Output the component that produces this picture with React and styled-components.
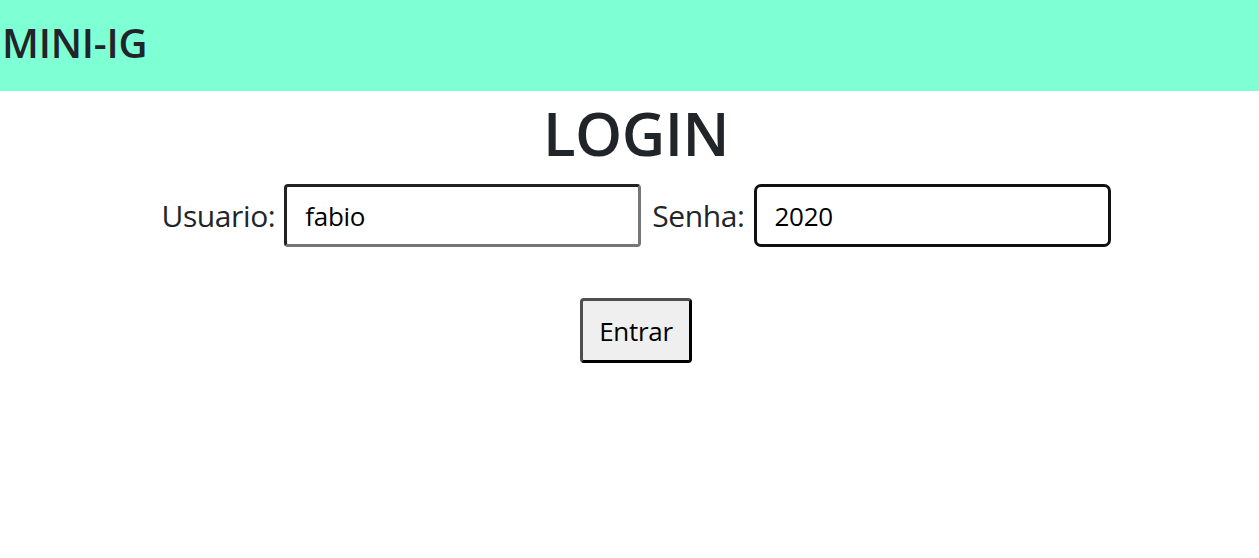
import React, { useState } from "react";
import styled, { createGlobalStyle } from "styled-components";

const GlobalStyle = createGlobalStyle`
    body {
        margin: 0;
        font-family: "Open Sans", "Noto Sans", sans-serif;
        color: #212529;
        background: #fff;
    }
`;

const Header = styled.header`
    height: 91px;
    background: aquamarine;
    display: flex;
    align-items: center;
    padding: 0 0 6px 2px;
    box-sizing: border-box;
`;

const Brand = styled.h1`
    margin: 0;
    font-size: 40px;
    font-weight: 600;
    letter-spacing: -0.2px;
`;

const Main = styled.main`
    display: flex;
    flex-direction: column;
    align-items: center;
    padding-left: 13px;
`;

const Title = styled.h2`
    margin: 2px 0 0;
    font-size: 60px;
    font-weight: 600;
    line-height: 80px;
    letter-spacing: -0.5px;
`;

const Form = styled.form`
    display: flex;
    flex-direction: column;
    align-items: center;
`;

const Row = styled.div`
    display: flex;
    align-items: center;
    gap: 9px;
    margin-top: 11px;
`;

const Label = styled.label`
    font-size: 30px;
    letter-spacing: -0.4px;
    margin-left: ${({ gap }) => gap || 0}px;
`;

const Input = styled.input`
    width: 357px;
    height: 63px;
    box-sizing: border-box;
    padding: 0 18px;
    font-family: inherit;
    font-size: 26px;
    letter-spacing: -0.3px;
    color: #000;
    caret-color: #000;
    background: #fff;
    border: 3px solid;
    border-radius: ${({ focused }) => (focused ? 7 : 4)}px;
    border-color: ${({ focused }) =>
        focused ? "#111" : "#222 #767676 #767676 #222"};
    outline: none;
`;

const Button = styled.button`
    margin-top: 51px;
    width: 112px;
    height: 65px;
    box-sizing: border-box;
    font-family: inherit;
    font-size: 26px;
    letter-spacing: -0.3px;
    color: #000;
    background: #efefef;
    border: 3px solid;
    border-color: #4f4f4f #000 #000 #4f4f4f;
    border-radius: 4px;
    cursor: pointer;
`;

export default function App() {
    const [usuario, setUsuario] = useState("fabio");
    const [senha, setSenha] = useState("2020");

    return (
        <>
            <GlobalStyle />
            <Header>
                <Brand>MINI-IG</Brand>
            </Header>
            <Main>
                <Title>LOGIN</Title>
                <Form onSubmit={(e) => e.preventDefault()}>
                    <Row>
                        <Label htmlFor="usuario">Usuario:</Label>
                        <Input id="usuario" value={usuario} onChange={(e) => setUsuario(e.target.value)} />
                        <Label htmlFor="senha" gap={2}>Senha:</Label>
                        <Input id="senha" focused autoFocus value={senha} onChange={(e) => setSenha(e.target.value)} />
                    </Row>
                    <Button type="submit">Entrar</Button>
                </Form>
            </Main>
        </>
    );
}
